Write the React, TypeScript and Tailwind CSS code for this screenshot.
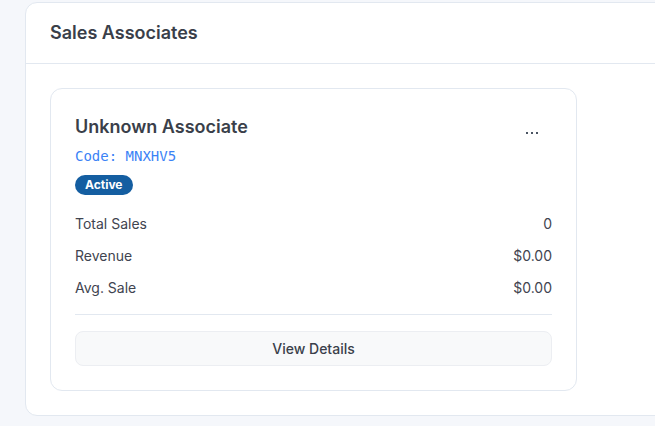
import React from "react";

const rows = [
  { label: "Total Sales", value: "0" },
  { label: "Revenue", value: "$0.00" },
  { label: "Avg. Sale", value: "$0.00" },
];

export default function App() {
  return (
    <div
      className="w-[655px] h-[426px] overflow-hidden bg-[#f5f7fb] pt-[2px] pl-[25px]"
      style={{ fontFamily: "Inter, 'Noto Sans', sans-serif" }}
    >
      <div className="w-[700px] bg-white border border-[#e2e8f0] rounded-xl">
        <div className="px-6 py-4 border-b border-[#e2e8f0]">
          <h2 className="text-lg leading-7 font-semibold text-[#3a3f4a]">Sales Associates</h2>
        </div>
        <div className="p-6">
          <div className="w-[527px] border border-[#e2e8f0] rounded-xl p-6">
            <div className="flex items-start justify-between">
              <div>
                <h3 className="text-lg leading-7 font-semibold text-[#3a3f4a]">Unknown Associate</h3>
                <div
                  className="mt-[5px] text-sm leading-5 text-[#3b82f6]"
                  style={{ fontFamily: "'DejaVu Sans Mono', 'Liberation Mono', monospace" }}
                >
                  Code: MNXHV5
                </div>
                <span className="mt-[9px] inline-flex items-center h-5 px-[10px] rounded-full bg-[#145ea1] text-white text-xs font-bold">
                  Active
                </span>
              </div>
              <button className="mt-[16px] mr-[14px] h-2 flex items-center">
                <svg width="12" height="2" viewBox="0 0 12 2">
                  <rect x="0" y="0" width="2" height="2" fill="#4b5563" />
                  <rect x="5" y="0" width="2" height="2" fill="#4b5563" />
                  <rect x="10" y="0" width="2" height="2" fill="#4b5563" />
                </svg>
              </button>
            </div>
            <div className="mt-[19px] flex flex-col gap-3">
              {rows.map((r) => (
                <div key={r.label} className="flex justify-between text-sm leading-5 text-[#3f4450]">
                  <span>{r.label}</span>
                  <span>{r.value}</span>
                </div>
              ))}
            </div>
            <div className="mt-4 border-t border-[#e2e8f0] pt-4">
              <button className="w-full h-[35px] flex items-center justify-center rounded-lg border border-[#eceef2] bg-[#f8f9fa] text-sm font-medium text-[#3a3f4a]">
                View Details
              </button>
            </div>
          </div>
        </div>
      </div>
    </div>
  );
}
